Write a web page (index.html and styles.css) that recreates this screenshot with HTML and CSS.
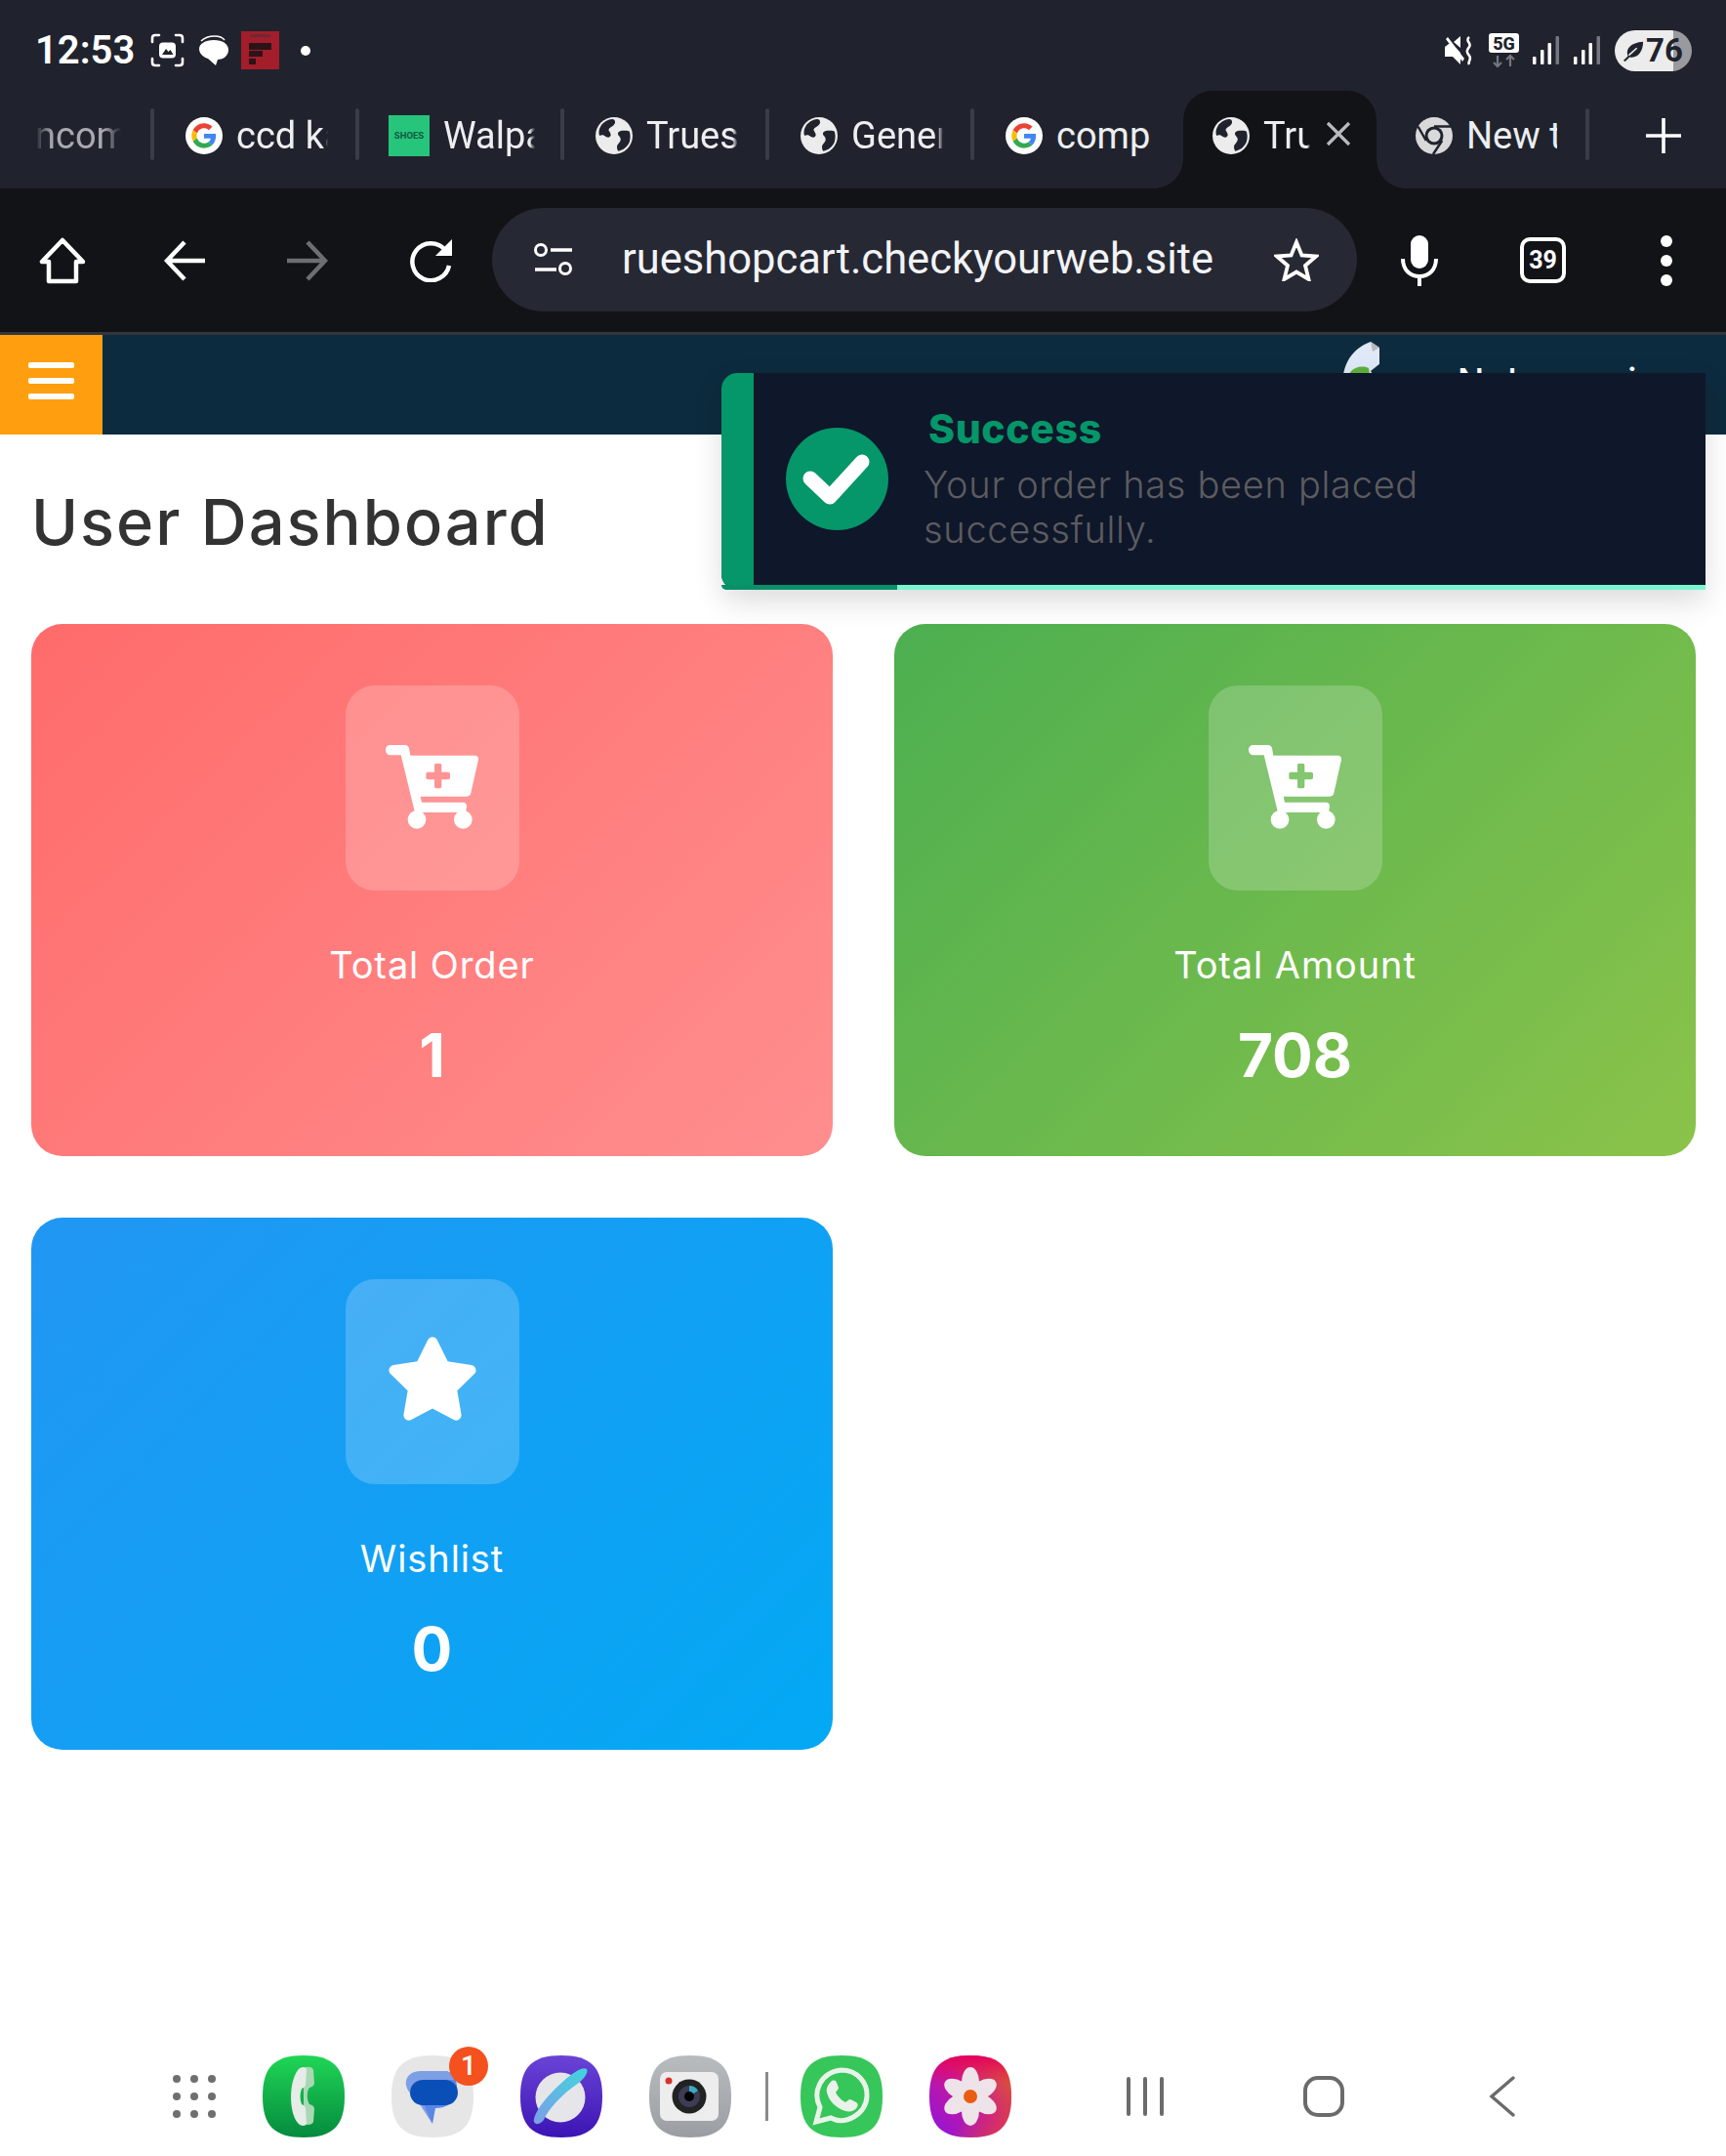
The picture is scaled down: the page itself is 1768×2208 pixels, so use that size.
FILE: index.html
```html
<!DOCTYPE html>
<html lang="en">
<head>
<meta charset="utf-8">
<title>User Dashboard</title>
<link rel="stylesheet" href="styles.css">
</head>
<body>
<svg class="defs" width="0" height="0" aria-hidden="true">
  <symbol id="g" viewBox="0 0 48 48">
    <circle cx="24" cy="24" r="24" fill="#fff"/>
    <g transform="translate(8 8) scale(.667)">
      <path fill="#EA4335" d="M24 9.5c3.54 0 6.71 1.22 9.21 3.6l6.85-6.85C35.9 2.38 30.47 0 24 0 14.62 0 6.51 5.38 2.56 13.22l7.98 6.19C12.43 13.72 17.74 9.5 24 9.5z"/>
      <path fill="#4285F4" d="M46.98 24.55c0-1.57-.15-3.09-.38-4.55H24v9.02h12.94c-.58 2.96-2.26 5.48-4.78 7.18l7.73 6c4.51-4.18 7.09-10.36 7.09-17.65z"/>
      <path fill="#FBBC05" d="M10.53 28.59c-.48-1.45-.76-2.99-.76-4.59s.27-3.14.76-4.59l-7.98-6.19C.92 16.46 0 20.12 0 24c0 3.88.92 7.54 2.56 10.78l7.97-6.19z"/>
      <path fill="#34A853" d="M24 48c6.48 0 11.93-2.13 16.03-5.81l-7.73-6c-2.15 1.45-4.92 2.3-8.3 2.3-6.26 0-11.57-4.22-13.47-9.91l-7.98 6.19C6.51 42.62 14.62 48 24 48z"/>
    </g>
  </symbol>
  <symbol id="globe" viewBox="0 0 36 36">
    <circle cx="18" cy="18" r="18" fill="#ececec"/>
    <path fill="#20232d" d="M16 2c-3 0-9 3-11 7-2 3-2 7-1 9 2-1 4-1 6 1 2 1 3 1 4 0 2-2 0-4-1-6-1-1 1-3 3-4 2-1 3-3 3-4 0-2-1-3-3-3ZM29 13c-3 0-6 0-7 2-1 2 1 3 2 5 1 2 0 4-2 6-2 2-1 5 0 7 5-1 9-4 11-9 1-4 1-7 0-10-1-1-2-1-4-1Z"/>
  </symbol>
  <symbol id="chrome" viewBox="0 0 38 38">
    <circle cx="19" cy="19" r="19" fill="#d9d9d9"/>
    <circle cx="19" cy="19" r="9.5" fill="#20232d"/>
    <circle cx="19" cy="19" r="6.5" fill="#d9d9d9"/>
    <path d="M19 9.5H36M10.8 24 2.5 9.5M27.2 24 18 38" stroke="#20232d" stroke-width="2.5" fill="none"/>
  </symbol>
  <symbol id="cart" viewBox="0 0 285 258">
    <path fill="#fff" fill-rule="evenodd" d="M15 0H60c6 0 11 4 12 10l4 22H274c8 0 12 6 11 13L262 148c-1 6-6 10-12 10H107l4 18H238c8 0 12 6 11 13l-3 18H90L47 31H15C6 31 0 24 0 15S6 0 15 0ZM155 57c-3 0-5 2-5 5v21h-20c-3 0-6 2-6 6v11c0 4 3 6 6 6h20v21c0 3 2 6 5 6h12c3 0 5-3 5-6v-21h20c3 0 6-2 6-6V89c0-4-3-6-6-6h-20V62c0-3-2-5-5-5Z"/>
    <circle cx="96" cy="229" r="28" fill="#fff"/>
    <circle cx="238" cy="229" r="28" fill="#fff"/>
  </symbol>
</svg>

<div class="device">
  <div class="chrome-top">
    <div class="status">
      <span class="time">12:53</span>
      <svg class="st-shot" viewBox="0 0 35 35"><path d="M9 2H5Q2 2 2 5V9M26 2h4q3 0 3 3V9M2 26v4q0 3 3 3H9M33 26v4q0 3-3 3H26" fill="none" stroke="#fff" stroke-width="2.6" stroke-linecap="round"/><rect x="9" y="9.500" width="17" height="16" rx="4" fill="#fff"/><path d="M12 22l4-6 2.500 3 2-2 3 5Z" fill="#20232d"/></svg>
      <svg class="st-bubble" viewBox="0 0 32 31"><path d="M3 6Q8 1 17 1 24 1 27 5" fill="none" stroke="#fff" stroke-width="1.500"/><path d="M16 5C25 5 31 9 31 15S26 25 20 25L18 31 10 24C4 22 1 18 1 14 1 9 7 5 16 5Z" fill="#fff"/></svg>
      <svg class="st-app" viewBox="0 0 39 39"><rect width="39" height="39" fill="#a41d2a"/><path d="M8 12H31V19H8ZM8 20H22V26H8ZM8 28H15V34H8Z" fill="#2b1418"/><path d="M9 3h21v3H9Z" fill="#6d2a33"/></svg>
      <span class="st-dot"></span>
      <span class="st-spacer"></span>
      <svg class="st-mute" viewBox="0 0 30 30"><path d="M0 11 4 8h4l8 9V29l-8-8H0ZM3 1l17 22-2 3L1 3ZM9 6l7-6v12Z" fill="#fff"/><path d="M25 1c-5 4 3 6 0 10s-3 5 0 9-2 6 0 9" fill="none" stroke="#fff" stroke-width="2.600"/></svg>
      <svg class="st-5g" viewBox="0 0 31 36"><rect width="31" height="20" rx="3" fill="#fff"/><text x="15.500" y="16.500" text-anchor="middle" class="t5g">5G</text><path d="M9 23V34M5 30l4 4 4-4M22 34V23M18 27l4-4 4 4" fill="none" stroke="#75777e" stroke-width="2.200"/></svg>
      <svg class="st-sig" viewBox="0 0 27 29"><rect x="0" y="21" width="3.500" height="8" rx="1" fill="#fff"/><rect x="8" y="14" width="3.500" height="15" rx="1" fill="#fff"/><rect x="15.500" y="7" width="3.500" height="22" rx="1" fill="#fff"/><rect x="23.500" y="0" width="3.500" height="29" rx="1" fill="#75777e"/></svg>
      <svg class="st-sig st-sig2" viewBox="0 0 27 29"><rect x="0" y="21" width="3.500" height="8" rx="1" fill="#fff"/><rect x="8" y="14" width="3.500" height="15" rx="1" fill="#fff"/><rect x="15.500" y="7" width="3.500" height="22" rx="1" fill="#fff"/><rect x="23.500" y="0" width="3.500" height="29" rx="1" fill="#75777e"/></svg>
      <span class="battery"><svg class="leaf" viewBox="0 0 24 24"><path d="M1 23 6 18C3 10 9 3 23 2 23 14 16 21 8 19L3 24Z" fill="#20232d"/><path d="M7 17 16 9" stroke="#ececec" stroke-width="1.800"/></svg><b class="batt-num">76</b></span>
    </div>
    <div class="tabs">
      <div class="tab tab-first"><span class="tab-text tab-text-first">ncom</span></div>
      <div class="tab"><svg class="fav"><use href="#g"/></svg><span class="tab-text">ccd kar</span></div>
      <div class="tab"><svg class="fav-sq" viewBox="0 0 42 42"><rect width="42" height="42" fill="#27c47c"/><text x="21" y="24" text-anchor="middle" class="shoes">SHOES</text></svg><span class="tab-text">Walpaper</span></div>
      <div class="tab"><svg class="fav"><use href="#globe"/></svg><span class="tab-text">Trueshop</span></div>
      <div class="tab"><svg class="fav"><use href="#globe"/></svg><span class="tab-text">General</span></div>
      <div class="tab tab-last"><svg class="fav"><use href="#g"/></svg><span class="tab-text tab-text-full">comp</span></div>
      <div class="tab-active">
        <svg class="fav"><use href="#globe"/></svg><span class="tab-text tab-text-short">True</span>
        <svg class="tab-x" viewBox="0 0 26 26"><path d="M2 2 24 24M24 2 2 24" stroke="#b9bac0" stroke-width="3.200" fill="none"/></svg>
      </div>
      <div class="tab tab-new"><svg class="fav"><use href="#chrome"/></svg><span class="tab-text tab-text-new">New tab</span></div>
      <svg class="tab-plus" viewBox="0 0 36 36"><path d="M18 0V36M0 18H36" stroke="#fff" stroke-width="3.600" stroke-linecap="round"/></svg>
    </div>
  </div>

  <div class="toolbar">
    <svg class="tb-icon tb-home" viewBox="0 0 48 48"><path d="M24 3 3 25H10V45H38V25H45Z" fill="none" stroke="#fff" stroke-width="4.500" stroke-linejoin="round"/></svg>
    <svg class="tb-icon tb-back" viewBox="0 0 44 44"><path d="M42 22H4M21 3 3 22 21 41" fill="none" stroke="#fff" stroke-width="4.500"/></svg>
    <svg class="tb-icon tb-fwd" viewBox="0 0 44 44"><path d="M2 22H40M23 3 41 22 23 41" fill="none" stroke="#6d6e72" stroke-width="4.500"/></svg>
    <svg class="tb-icon tb-reload" viewBox="0 0 44 44"><path d="M36 11A19 19 0 1 0 40 27" fill="none" stroke="#fff" stroke-width="4.500"/><path d="M43 0V17H26Z" fill="#fff"/></svg>
    <div class="omni">
      <svg class="omni-tune" viewBox="0 0 40 34"><circle cx="7" cy="7" r="5.500" fill="none" stroke="#fff" stroke-width="3"/><path d="M17 7H39M1 27H23" stroke="#fff" stroke-width="3.400"/><circle cx="32" cy="26" r="5.500" fill="none" stroke="#fff" stroke-width="3"/></svg>
      <span class="omni-url">rueshopcart.checkyourweb.site</span>
      <svg class="omni-star" viewBox="0 0 46 44"><path d="M23 4 28.500 17.500 43 18.500 32 28 35.500 42 23 34.500 10.500 42 14 28 3 18.500 17.500 17.500Z" fill="none" stroke="#fff" stroke-width="3.800"/></svg>
    </div>
    <svg class="tb-mic" viewBox="0 0 38 52"><rect x="10" y="0" width="18" height="34" rx="9" fill="#fff"/><path d="M2 24C2 36 10 42 19 42S36 36 36 24M19 42V52" fill="none" stroke="#fff" stroke-width="4"/></svg>
    <span class="tb-count">39</span>
    <span class="tb-dots"><i class="dot"></i><i class="dot"></i><i class="dot"></i></span>
  </div>

  <header class="site-head">
    <button class="burger" type="button" aria-label="Menu"><i class="bar"></i><i class="bar"></i><i class="bar"></i></button>
    <svg class="site-logo" viewBox="0 0 40 40"><path d="M39 6 30 0C14 6 3 18 1 40H39Z" fill="#dfe8f6"/><path d="M5 40C7 30 16 22 28 27L30 40Z" fill="#5cb23a"/><path d="M30 0 39 6 32 10Z" fill="#b7b7b7"/><path d="M30 30 40 22V32L34 36Z" fill="#0d2b3e"/></svg>
    <span class="site-name">Nelsonani</span>
  </header>

  <main class="content">
    <h1 class="page-title">User Dashboard</h1>
    <section class="cards">
      <article class="card card-red">
        <div class="tile"><svg class="tile-cart"><use href="#cart"/></svg></div>
        <p class="card-label">Total Order</p>
        <p class="card-value">1</p>
      </article>
      <article class="card card-green">
        <div class="tile"><svg class="tile-cart"><use href="#cart"/></svg></div>
        <p class="card-label">Total Amount</p>
        <p class="card-value">708</p>
      </article>
      <article class="card card-blue">
        <div class="tile"><svg class="tile-star" viewBox="0 0 576 512"><path fill="#fff" d="M259.300 17.800 194 150.200 47.900 171.500c-26.200 3.800-36.700 36.100-17.700 54.600l105.700 103-25 145.500c-4.500 26.300 23.200 46 46.400 33.700L288 439.600l130.700 68.700c23.200 12.200 50.900-7.400 46.400-33.700l-25-145.500 105.700-103c19-18.500 8.500-50.800-17.700-54.600L382 150.200 316.700 17.800c-11.700-23.600-45.600-23.900-57.400 0z"/></svg></div>
        <p class="card-label">Wishlist</p>
        <p class="card-value">0</p>
      </article>
    </section>
  </main>

  <div class="toast">
    <span class="toast-side"></span>
    <svg class="toast-check" viewBox="0 0 105 105"><circle cx="52.500" cy="52.500" r="52.500" fill="#059669"/><path d="M25 52 45 71 78 35" fill="none" stroke="#fff" stroke-width="15" stroke-linecap="round" stroke-linejoin="round"/></svg>
    <div class="toast-body">
      <div class="toast-title">Success</div>
      <div class="toast-msg">Your order has been placed successfully.</div>
    </div>
    <span class="toast-progress"><i class="toast-progress-done"></i></span>
  </div>

  <footer class="dock">
    <span class="apps"><i class="adot"></i><i class="adot"></i><i class="adot"></i><i class="adot"></i><i class="adot"></i><i class="adot"></i><i class="adot"></i><i class="adot"></i><i class="adot"></i></span>
    <svg class="app" viewBox="0 0 84 84"><defs><linearGradient id="gp" x1="0" y1="0" x2="0" y2="1"><stop offset="0" stop-color="#1fd655"/><stop offset="1" stop-color="#058a3e"/></linearGradient></defs><path fill="url(#gp)" d="M42 0C72 0 84 12 84 42S72 84 42 84 0 72 0 42 12 0 42 0Z"/><path fill="#a9d8b4" d="M42 13c4-2 9-2 10 2l1 13c0 3-2 4-5 5-3 3-3 13 0 17 3 1 5 2 5 5l-1 13c-1 3-6 4-10 2Z"/><path fill="#e6ece7" d="M38 13c4-2 7-1 7 2l-1 15c0 2-2 3-4 4-2 5-2 11 0 16 2 1 4 2 4 4l1 15c0 3-3 4-7 2C26 62 26 24 38 13Z"/></svg>
    <span class="app-wrap">
      <svg class="app" viewBox="0 0 84 84"><path fill="#e6e6e6" d="M42 0C72 0 84 12 84 42S72 84 42 84 0 72 0 42 12 0 42 0Z"/><path fill="#5b86e5" d="M32 16H54C64 16 68 26 67 36 66 48 56 54 45 54L42 70 30 50Z"/><path fill="#7d9fe6" d="M30 16H56C62 18 64 22 64 25H34C24 25 19 32 19 38 22 46 30 50 34 52L42 70 25 44C16 38 14 30 15 26 16 20 22 16 30 16Z"/><rect x="19" y="25" width="49" height="26" rx="13" fill="#0a4fb8"/></svg>
      <span class="badge">1</span>
    </span>
    <svg class="app" viewBox="0 0 84 84"><defs><linearGradient id="gb" x1="0" y1="0" x2="0" y2="1"><stop offset="0" stop-color="#6a43d6"/><stop offset="1" stop-color="#3c14b4"/></linearGradient><linearGradient id="gr" x1="1" y1="0" x2="0" y2="1"><stop offset="0" stop-color="#3fd6dc"/><stop offset="1" stop-color="#7c9ee8"/></linearGradient></defs><path fill="url(#gb)" d="M42 0C72 0 84 12 84 42S72 84 42 84 0 72 0 42 12 0 42 0Z"/><ellipse cx="41" cy="43" rx="25.500" ry="25.500" fill="#e6e6ea"/><path fill="url(#gr)" d="M68 14C70 17 66 23 60 28 42 40 28 56 24 66 21 70 16 72 14 68 13 64 18 52 34 36 46 24 62 10 68 14Z"/></svg>
    <svg class="app" viewBox="0 0 84 84"><defs><linearGradient id="gc" x1="0" y1="0" x2="0" y2="1"><stop offset="0" stop-color="#b8bcbf"/><stop offset="1" stop-color="#9a9da2"/></linearGradient></defs><path fill="url(#gc)" d="M42 0C72 0 84 12 84 42S72 84 42 84 0 72 0 42 12 0 42 0Z"/><rect x="11" y="17" width="60" height="50" rx="7" fill="#ededed"/><circle cx="20" cy="26" r="3.500" fill="#d8322a"/><circle cx="41" cy="42" r="17.500" fill="#222"/><circle cx="41" cy="42" r="11" fill="#3d3c55"/><path d="M41 31A11 11 0 0 1 50 36L41 42Z" fill="#3aa9c4"/><circle cx="41" cy="42" r="5" fill="#000"/></svg>
    <span class="dock-sep"></span>
    <svg class="app" viewBox="0 0 84 84"><path fill="#37c659" d="M42 0C72 0 84 12 84 42S72 84 42 84 0 72 0 42 12 0 42 0Z"/><path fill="none" stroke="#e9f3ea" stroke-width="5" d="M16 68 20 53C12 38 20 17 42 15 58 15 69 28 68 42 67 60 46 72 31 64Z"/><path fill="#e9f3ea" d="M31 27c2-2 5-2 6 1l2 5c0 2-2 3-3 5 2 4 6 8 10 10 2-1 3-3 5-3l6 3c2 1 2 3 1 5-3 5-10 6-17 2-7-4-12-9-14-17-1-4 1-8 4-11Z"/></svg>
    <svg class="app" viewBox="0 0 84 84"><defs><linearGradient id="gg" x1="0" y1="1" x2="1" y2="0"><stop offset="0" stop-color="#8c14e0"/><stop offset=".5" stop-color="#c8189a"/><stop offset="1" stop-color="#e2700a"/></linearGradient><linearGradient id="gt" x1="0" y1="0" x2="0" y2="1"><stop offset="0" stop-color="#e4005f"/><stop offset=".35" stop-color="#e4005f" stop-opacity="0"/></linearGradient><linearGradient id="gu" x1="0" y1="0" x2="1" y2="1"><stop offset=".6" stop-color="#e04040" stop-opacity="0"/><stop offset="1" stop-color="#e04040"/></linearGradient></defs><path fill="url(#gg)" d="M42 0C72 0 84 12 84 42S72 84 42 84 0 72 0 42 12 0 42 0Z"/><path fill="url(#gt)" d="M42 0C72 0 84 12 84 42S72 84 42 84 0 72 0 42 12 0 42 0Z"/><path fill="url(#gu)" d="M42 0C72 0 84 12 84 42S72 84 42 84 0 72 0 42 12 0 42 0Z"/><g fill="#efe3ea"><ellipse cx="42" cy="27" rx="9" ry="15"/><ellipse cx="42" cy="57" rx="9" ry="15"/><ellipse cx="29" cy="34.500" rx="9" ry="15" transform="rotate(-60 29 34.500)"/><ellipse cx="55" cy="34.500" rx="9" ry="15" transform="rotate(60 55 34.500)"/><ellipse cx="29" cy="49.500" rx="9" ry="15" transform="rotate(60 29 49.500)"/><ellipse cx="55" cy="49.500" rx="9" ry="15" transform="rotate(-60 55 49.500)"/></g><circle cx="42" cy="42" r="7" fill="#e85d10"/></svg>
    <span class="dock-gap"></span>
    <span class="nav-lines"><i class="nav-line"></i><i class="nav-line"></i><i class="nav-line"></i></span>
    <span class="nav-home"></span>
    <svg class="nav-back" viewBox="0 0 27 42"><path d="M25 2 3 21 25 40" fill="none" stroke="#6b6b6b" stroke-width="3.400" stroke-linecap="round"/></svg>
  </footer>
</div>
</body>
</html>
```
FILE: styles.css
```css
* { box-sizing: border-box; }
html, body { margin: 0; padding: 0; background: #fff; }
.defs { position: absolute; }
.device {
  position: relative;
  width: 1768px;
  height: 2208px;
  overflow: hidden;
  display: flex;
  flex-direction: column;
  font-family: Inter, "Liberation Sans", sans-serif;
}

/* status bar */
.chrome-top { background: #20232d; }
.status { height: 93px; display: flex; align-items: center; padding: 10px 35px 0 36px; color: #fff; }
.time { font: 600 40px/1 Roboto, sans-serif; width: 118px; }
.st-shot { width: 35px; height: 35px; }
.st-bubble { width: 32px; height: 31px; margin-left: 14px; }
.st-app { width: 39px; height: 39px; margin-left: 12px; }
.st-dot { width: 10px; height: 10px; border-radius: 50%; background: #fff; margin-left: 22px; }
.st-spacer { flex: 1; }
.st-mute { width: 30px; height: 30px; }
.st-5g { width: 31px; height: 36px; margin-left: 15px; }
.t5g { font: 800 18px Roboto, sans-serif; fill: #20232d; }
.shoes { font: 700 9.500px Roboto, sans-serif; fill: #0d5a3a; }
.st-sig { width: 27px; height: 29px; margin-left: 14px; }
.st-sig2 { margin-left: 15px; }
.battery {
  width: 79px; height: 42px; margin-left: 15px; border-radius: 21px;
  background: linear-gradient(90deg, #ececec 76%, #9a9a9e 76%);
  display: flex; align-items: center; padding-left: 8px; color: #20232d;
}
.leaf { width: 22px; height: 22px; flex: none; }
.batt-num { font: 700 33px/1 Roboto, sans-serif; margin-left: 2px; }

/* tabs */
.tabs { height: 100px; display: flex; align-items: stretch; }
.tab { position: relative; width: 210px; height: 100px; padding: 0 0 8px 32px; display: flex; align-items: center; }
.tab::after { content: ""; position: absolute; right: 0; top: 18px; width: 4px; height: 53px; border-radius: 2px; background: #3a3d47; }
.tab-first { width: 158px; padding-left: 36px; }
.tab-last { width: 214px; }
.tab-last::after { display: none; }
.tab-new { width: 218px; padding-left: 40px; }
.fav { width: 38px; height: 38px; flex: none; margin-right: 14px; }
.fav-sq { width: 42px; height: 42px; flex: none; margin-right: 14px; margin-left: -2px; }
.tab-text {
  font: 400 38px/46px Roboto, sans-serif; color: #eceef0; white-space: nowrap; overflow: hidden; width: 94px;
  mask-image: linear-gradient(90deg, #000 94%, transparent 100%);
}
.tab-text-first { width: 88px; mask-image: linear-gradient(90deg, transparent 0, #000 20%, #000 80%, transparent 100%); color: #a8aab0; }
.tab-text-short { width: 48px; }
.tab-text-new { width: 93px; mask-image: none; }
.tab-text-full { width: 100px; mask-image: none; }
.tab-active {
  position: relative; width: 198px; height: 100px; padding: 0 0 8px 30px;
  display: flex; align-items: center; background: #121317; border-radius: 30px 30px 0 0;
}
.tab-active::before, .tab-active::after {
  content: ""; position: absolute; bottom: 0; width: 30px; height: 30px;
  background: radial-gradient(circle at var(--cx) 0, #20232d 29.500px, #121317 30px);
}
.tab-active::before { --cx: 0; left: -30px; }
.tab-active::after { --cx: 100%; right: -30px; }
.tab-x { width: 26px; height: 26px; margin-left: 16px; margin-top: -5px; }
.tab-plus { width: 36px; height: 36px; margin: 28px 0 0 58px; }

/* toolbar */
.toolbar { height: 150px; background: #121317; border-bottom: 3px solid #33353c; display: flex; align-items: center; padding-left: 40px; }
.tb-icon { flex: none; }
.tb-home { width: 48px; height: 48px; }
.tb-back { width: 44px; height: 44px; margin-left: 80px; }
.tb-fwd { width: 44px; height: 44px; margin-left: 80px; }
.tb-reload { width: 44px; height: 44px; margin-left: 84px; }
.omni { width: 886px; height: 106px; margin-left: 40px; margin-top: -1px; border-radius: 53px; background: #262833; display: flex; align-items: center; padding-left: 43px; }
.omni-tune { width: 40px; height: 34px; flex: none; }
.omni-url { font: 400 43.500px/50px Roboto, sans-serif; color: #f2f3f5; margin-left: 50px; width: 608px; white-space: nowrap; }
.omni-star { width: 46px; height: 44px; margin-left: 60px; flex: none; }
.tb-mic { width: 38px; height: 52px; margin-left: 45px; }
.tb-count {
  width: 47px; height: 47px; margin-left: 84px; border: 4px solid #fff; border-radius: 10px;
  font: 700 25px/39px Roboto, sans-serif; color: #fff; text-align: center;
}
.tb-dots { display: flex; flex-direction: column; gap: 8px; margin-left: 97px; }
.dot { display: block; width: 12px; height: 12px; border-radius: 50%; background: #fff; }

/* site header */
.site-head { height: 102px; background: #0d2b3e; display: flex; align-items: flex-start; flex: none; }
.burger { width: 105px; height: 102px; border: 0; padding: 28px 0 0 29px; background: #ff9f0f; display: flex; flex-direction: column; gap: 10px; }
.bar { display: block; width: 47px; height: 6px; border-radius: 2px; background: #fff; }
.site-logo { width: 40px; height: 40px; margin: 7px 0 0 1269px; flex: none; }
.site-name { font: 500 36px/50px Inter, sans-serif; color: #fff; margin: 22px 0 0 79px; letter-spacing: 1.500px; white-space: nowrap; }

/* content */
.content { flex: 1; padding: 0 31px 0 32px; }
.page-title { margin: 53px 0 67px; font: 500 65px/74px Inter, sans-serif; color: #333; letter-spacing: 2px; }
.cards { display: grid; grid-template-columns: 821px 821px; gap: 63px; }
.card { height: 545px; border-radius: 32px; padding-top: 63px; color: #fff; display: flex; flex-direction: column; align-items: center; }
.card-red { background: linear-gradient(135deg, #ff6b6b, #ff8e8e); }
.card-green { background: linear-gradient(135deg, #4caf50, #8bc34a); }
.card-blue { background: linear-gradient(135deg, #2196f3, #03a9f4); }
.tile { width: 178px; height: 210px; border-radius: 30px; background: rgba(255, 255, 255, .2); display: flex; align-items: center; justify-content: center; }
.tile-cart { width: 95px; height: 86px; margin-top: -3px; }
.tile-star { width: 96px; height: 86px; margin-top: -6px; }
.card-label { margin: 53px 0 0; font: 400 38px/46px Inter, sans-serif; letter-spacing: .9px; }
.card-value { margin: 35px 0 0; font: 700 62px/70px Inter, sans-serif; }

/* toast */
.toast {
  position: absolute; left: 739px; top: 382px; width: 1008px; height: 222px;
  background: #0f172a; border-radius: 16px 0 0 16px;
  box-shadow: 0 12px 30px rgba(0, 0, 0, .14);
}
.toast-side { position: absolute; left: 0; top: 0; bottom: 0; width: 33px; background: #059669; border-radius: 16px 0 0 16px; }
.toast-check { position: absolute; left: 66px; top: 56px; width: 105px; height: 105px; }
.toast-body { position: absolute; left: 207px; top: 31px; width: 560px; }
.toast-title { font: 800 41px/52px Inter, sans-serif; color: #059669; margin-left: 5px; letter-spacing: .6px; }
.toast-msg { font: 300 38px/46px Inter, sans-serif; color: #5c5c5f; margin-top: 8px; letter-spacing: .7px; }
.toast-progress { position: absolute; left: 0; right: 0; bottom: 0; height: 5px; background: #7af5d0; border-radius: 0 0 0 16px; }
.toast-progress-done { display: block; width: 180px; height: 5px; background: #0a8f68; border-radius: 0 0 0 16px; }

/* dock */
.dock { position: absolute; left: 177px; top: 2105px; width: 1400px; height: 84px; display: flex; align-items: center; }
.apps { width: 44px; display: grid; grid-template-columns: repeat(3, 8px); gap: 10px 10px; }
.adot { display: block; width: 8px; height: 8px; border-radius: 50%; background: #6f6f6f; }
.app { width: 84px; height: 84px; flex: none; margin-left: 48px; }
.app-wrap { position: relative; width: 84px; height: 84px; margin-left: 48px; flex: none; }
.app-wrap .app { margin-left: 0; display: block; }
.badge { position: absolute; left: 59px; top: -9px; width: 40px; height: 40px; border-radius: 50%; background: #f4511e; color: #fff; font: 500 28px/40px Roboto, sans-serif; text-align: center; }
.dock-sep { width: 3px; height: 50px; margin-left: 35px; margin-right: -15px; background: #8a8a8a; }
.dock-gap { width: 118px; flex: none; }
.nav-lines { display: flex; gap: 13px; }
.nav-line { display: block; width: 4px; height: 40px; border-radius: 2px; background: #6b6b6b; }
.nav-home { width: 42px; height: 42px; margin-left: 143px; border: 4px solid #6b6b6b; border-radius: 15px; }
.nav-back { width: 27px; height: 42px; margin-left: 148px; }
```
